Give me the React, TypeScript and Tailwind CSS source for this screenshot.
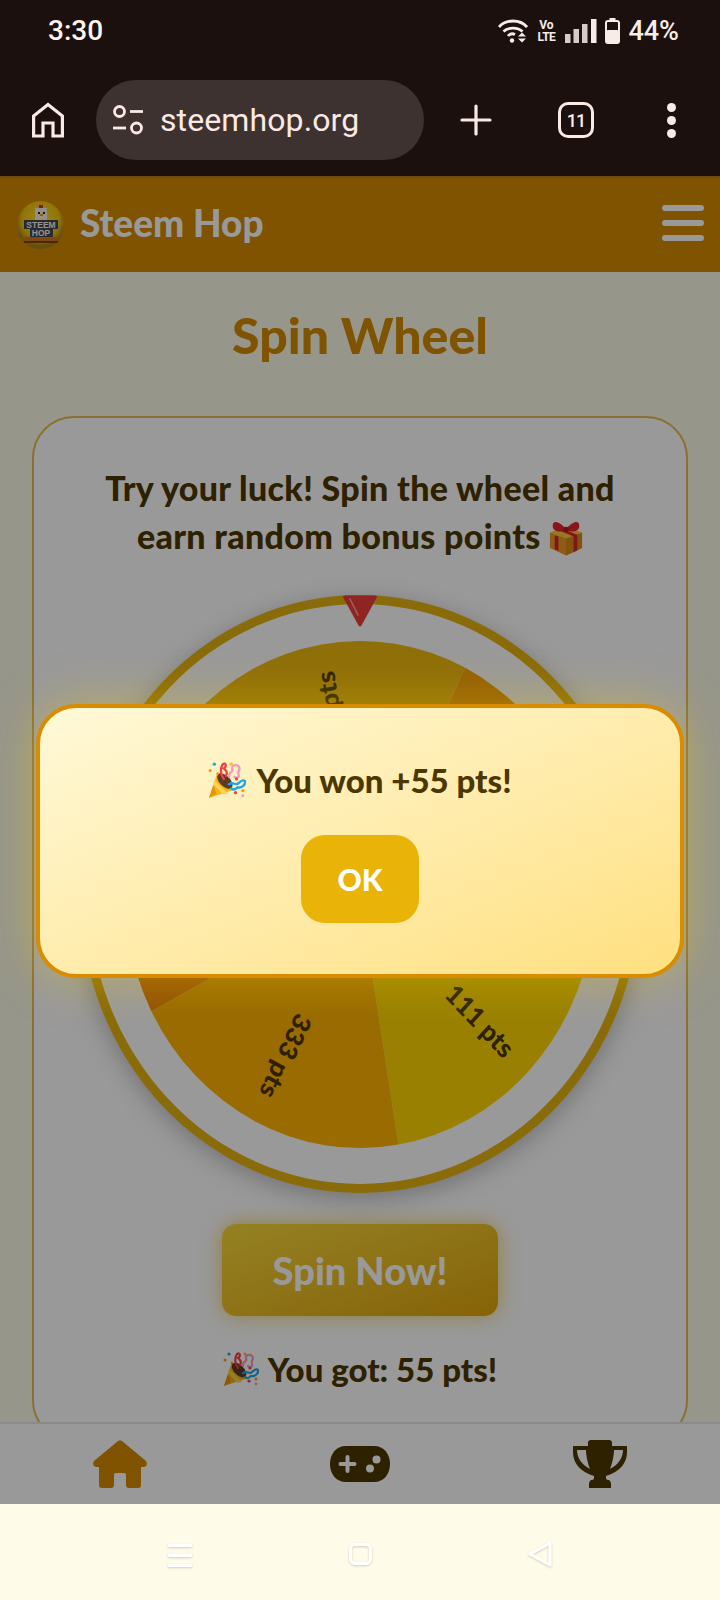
import React from 'react';

const SEGMENTS = [
  { from: -45.4, to: 26.6, color: '#eeb90f', label: '55 pts' },
  { from: 26.6, to: 98.6, color: '#f59e0b', label: '' },
  { from: 98.6, to: 170.6, color: '#ffd500', label: '111 pts' },
  { from: 170.6, to: 242.6, color: '#ffb300', label: '333 pts' },
  { from: 242.6, to: 314.6, color: '#f58a07', label: '' },
];

const polar = (deg: number, r: number) => {
  const rad = ((deg - 90) * Math.PI) / 180;
  return `${253.5 + r * Math.cos(rad)} ${253.5 + r * Math.sin(rad)}`;
};

const PartyPopper = ({ className }: { className: string }) => (
  <svg viewBox="0 0 36 36" className={className}>
    <path d="M1 35 L9 11 L25 27 Z" fill="#f5b21a" />
    <path d="M1 35 L5 23 L8 31 Z" fill="#e8930f" />
    <path d="M6 18 L19 31 L14 31.500 L5 22 Z" fill="#fcd34d" />
    <ellipse cx="16" cy="19" rx="5" ry="9" transform="rotate(-45 16 19)" fill="#5d3a24" />
    <path d="M15 17 C11 12 12 6 14 3 C17 1 18 5 15 7 C17 9 19 10 17 14" fill="none" stroke="#ef4444" strokeWidth="2.200" strokeLinecap="round" />
    <path d="M20 15 C19 10 25 11 23 7 C22 4 27 3 29 5 C32 8 27 10 29 13 C30 15 27 17 25 15" fill="none" stroke="#f49ac1" strokeWidth="2.200" strokeLinecap="round" />
    <path d="M20 22 C24 19 26 24 29 21 C31 19 33 17 35 19 C36 22 32 26 28 25 C26 27 24 28 22 26" fill="none" stroke="#1ea7e8" strokeWidth="2.200" strokeLinecap="round" />
    <circle cx="6" cy="3" r="1.600" fill="#1ea7e8" />
    <circle cx="2" cy="9" r="1.500" fill="#f59e0b" />
    <circle cx="9" cy="12" r="1.300" fill="#f59e0b" />
    <circle cx="22" cy="3" r="1.500" fill="#fbbf24" />
    <circle cx="27" cy="17" r="1.500" fill="#ef4444" />
    <circle cx="26" cy="30" r="1.600" fill="#ef4444" />
    <circle cx="33" cy="28" r="1.500" fill="#f59e0b" />
    <circle cx="33" cy="33" r="1.400" fill="#f49ac1" />
  </svg>
);

const Gift = () => (
  <svg viewBox="0 0 36 38" className="inline-block h-[37px] w-[34px] align-[-7px]">
    <path d="M1 14 L18 8 L35 14 L35 30 L18 38 L1 30 Z" fill="#ee9a28" />
    <path d="M18 20 L35 14 L35 30 L18 38 Z" fill="#d98a1a" />
    <path d="M1 14 L18 8 L35 14 L18 20 Z" fill="#ffc93c" />
    <path d="M10 11 L14 10 L30 16 L30 32.500 L26 34.500 L26 18 Z" fill="#d5262a" />
    <path d="M6 17 L10 18 L10 33 L6 31.500 Z" fill="#d5262a" />
    <path d="M18 10 C10 0 3 1 4 7 C4 13 12 14 18 11 C24 14 32 13 32 7 C33 1 26 0 18 10 Z" fill="#e8262c" />
    <circle cx="18" cy="10.500" r="3" fill="#b91c1c" />
  </svg>
);

const Logo = () => (
  <svg viewBox="0 0 47 48" className="h-12 w-[47px]">
    <defs>
      <radialGradient id="logoBg" cx="50%" cy="40%" r="55%">
        <stop offset="0%" stopColor="#ffe033" />
        <stop offset="70%" stopColor="#f6c410" />
        <stop offset="100%" stopColor="#a8801a" />
      </radialGradient>
    </defs>
    <ellipse cx="23.500" cy="24" rx="23.500" ry="24" fill="url(#logoBg)" />
    <rect x="18" y="7" width="12" height="12" fill="#f4efe0" />
    <rect x="22" y="4" width="4" height="3" fill="#d92d20" />
    <rect x="21" y="11" width="2" height="2" fill="#222" />
    <rect x="26" y="11" width="2" height="2" fill="#222" />
    <rect x="23" y="13" width="3" height="2" fill="#f59e0b" />
    <path d="M7 19 H41 V28 H36 V36 H13 V28 H7 Z" fill="#44474d" />
    <text x="24" y="27" textAnchor="middle" fontFamily="'Liberation Sans', sans-serif" fontWeight="700" fontSize="8.500" fill="#f5f5f5">STEEM</text>
    <text x="24" y="35" textAnchor="middle" fontFamily="'Liberation Sans', sans-serif" fontWeight="700" fontSize="8.500" fill="#f5f5f5">HOP</text>
    <path d="M7 36 H41 L40 41 H8 Z" fill="#d9761f" />
    <path d="M7 41 H41" stroke="#5c3310" strokeWidth="1.500" />
  </svg>
);

const StatusIcons = () => (
  <div className="flex items-center text-[#f7ece8]">
    <svg viewBox="0 0 30 24" className="h-6 w-[30px]" fill="none" stroke="currentColor" strokeWidth="2.800">
      <path d="M1 8 C8 0 22 0 29 8" />
      <path d="M5.500 12.500 C10 8 20 8 24.500 12.500" />
      <path d="M10 17 C12 14.500 15 14.500 17 15.500" />
      <circle cx="14" cy="21.500" r="2.200" fill="currentColor" stroke="none" />
      <path d="M20 17.500 H28 L24 13.500 Z M20 19.500 H28 L24 23.500 Z" fill="currentColor" stroke="none" />
    </svg>
    <div className="ml-[9px] flex w-[18px] flex-col items-center font-['Roboto',sans-serif] text-[12px] font-bold leading-[12px]">
      <span>Vo</span>
      <span className="tracking-[-0.5px]">LTE</span>
    </div>
    <svg viewBox="0 0 32 24" className="ml-[10px] h-6 w-8" fill="currentColor">
      <rect x="0" y="15" width="5.500" height="9" opacity="0.85" />
      <rect x="8.500" y="10" width="5.500" height="14" opacity="0.85" />
      <rect x="17" y="5" width="5.500" height="19" opacity="0.85" />
      <rect x="26" y="0" width="5.500" height="24" />
    </svg>
    <svg viewBox="0 0 15 26" className="ml-[8px] h-[26px] w-[15px]">
      <rect x="4.500" y="0" width="6" height="3" fill="currentColor" />
      <rect x="1" y="3" width="13" height="22" rx="2" fill="none" stroke="currentColor" strokeWidth="2" />
      <rect x="1" y="12" width="13" height="13" rx="2" fill="currentColor" />
    </svg>
    <span className="ml-[8px] font-['Roboto',sans-serif] text-[27px] font-medium leading-none">44%</span>
  </div>
);

const BrowserBar = () => (
  <div className="flex h-[116px] items-center pt-1 text-[#fbe9e3]">
    <svg viewBox="0 0 32 36" className="ml-8 h-9 w-8" fill="none" stroke="currentColor" strokeWidth="3.200">
      <path d="M1.600 34 V14 L16 2.500 L30.400 14 V34 H21 V21 H11 V34 Z" />
    </svg>
    <div className="ml-8 flex h-20 w-[328px] items-center rounded-full bg-[#3e3231]">
      <svg viewBox="0 0 30 32" className="ml-[17px] h-8 w-[30px]" fill="none" stroke="currentColor" strokeWidth="2.800">
        <circle cx="6.500" cy="7.500" r="5" />
        <path d="M17 7.500 H30" />
        <path d="M0 24 H13" />
        <circle cx="23.500" cy="24" r="5" />
      </svg>
      <span className="ml-[17px] font-['Roboto',sans-serif] text-[32px] leading-none tracking-[0.1px]">steemhop.org</span>
    </div>
    <svg viewBox="0 0 32 32" className="ml-[36px] h-8 w-8" fill="none" stroke="currentColor" strokeWidth="3.200" strokeLinecap="round">
      <path d="M16 2 V30 M2 16 H30" />
    </svg>
    <div className="ml-[66px] flex h-9 w-9 items-center justify-center rounded-[10px] border-[3.500px] border-[#fbe9e3] font-['Roboto',sans-serif] text-[18px] font-medium tracking-[-1px]">
      11
    </div>
    <div className="ml-[73px] flex flex-col gap-[4px]">
      <span className="h-[9px] w-[9px] rounded-full bg-[#fbe9e3]" />
      <span className="h-[9px] w-[9px] rounded-full bg-[#fbe9e3]" />
      <span className="h-[9px] w-[9px] rounded-full bg-[#fbe9e3]" />
    </div>
  </div>
);

const Wheel = () => (
  <div className="relative mx-auto mt-[35px] flex h-[598px] w-[560px] items-center justify-center rounded-[50%] border-[9px] border-[#e6b30f] bg-white shadow-[0_6px_24px_rgba(0,0,0,0.25)]">
    <svg viewBox="0 0 507 507" preserveAspectRatio="none" className="h-[507px] w-[470px]">
      {SEGMENTS.map((s) => (
        <path
          key={s.from}
          d={`M253.500 253.500 L${polar(s.from, 253.5)} A253.500 253.500 0 0 1 ${polar(s.to, 253.5)} Z`}
          fill={s.color}
        />
      ))}
      {SEGMENTS.filter((s) => s.label).map((s) => (
        <text
          key={s.label}
          x={253.5 + 226}
          y={253.5 + 9}
          textAnchor="end"
          fontFamily="Lato, sans-serif"
          fontWeight="900"
          fontSize="27"
          fill="#4d3700"
          transform={`rotate(${(s.from + s.to) / 2 - 90} 253.500 253.500)`}
        >
          {s.label}
        </text>
      ))}
    </svg>
    <svg viewBox="0 0 36 32" className="absolute left-1/2 top-[-9px] h-8 w-9 -translate-x-1/2">
      <path d="M3 0.500 H33 Q35.500 0.500 34.500 3 L19.500 30.500 Q18 32.500 16.500 30.500 L1.500 3 Q0.500 0.500 3 0.500 Z" fill="#ef3f38" />
      <path d="M8 4 L16 20" stroke="#f8a5a0" strokeWidth="1.500" strokeLinecap="round" />
    </svg>
  </div>
);

const HomeIcon = () => (
  <svg viewBox="0 0 54 48" className="h-12 w-[54px]" fill="#d48a00">
    <path d="M25 1 Q27 -0.500 29 1 L53 21 Q55.500 26 51 27 H48 V45 Q48 48 45 48 H36 Q33 48 33 45 V35 Q33 33 31 33 H23 Q21 33 21 35 V45 Q21 48 18 48 H9 Q6 48 6 45 V27 H3 Q-1.500 26 1 21 Z" />
  </svg>
);

const GameIcon = () => (
  <svg viewBox="0 0 60 36" className="h-9 w-[60px]">
    <path d="M16 0 H44 C54 0 60 8 60 18 C60 28 54 36 44 36 H16 C6 36 0 28 0 18 C0 8 6 0 16 0 Z" fill="#4d3700" />
    <path d="M17.500 11 V25 M10.500 18 H24.500" stroke="#fff" strokeWidth="4" strokeLinecap="round" />
    <circle cx="46.500" cy="13.500" r="4" fill="#fff" />
    <circle cx="40" cy="22.500" r="4" fill="#fff" />
  </svg>
);

const TrophyIcon = () => (
  <svg viewBox="0 0 54 48" className="h-12 w-[54px]">
    <path d="M15 3 Q15 0 18 0 H36 Q39 0 39 3 V6 H54 V12 C54 24 46 32 33 36 V38 Q33 40 35 40 H36 Q38 41 38 44 V48 H16 V44 Q16 41 18 40 H19 Q21 40 21 38 V36 C8 32 0 24 0 12 V6 H15 Z" fill="#4d3700" />
    <path d="M4 10 H13 C13 16 15 24 17 29 C9 25 4 18 4 10 Z" fill="#fff" />
    <path d="M50 10 H41 C41 16 39 24 37 29 C45 25 50 18 50 10 Z" fill="#fff" />
  </svg>
);

export default function App() {
  return (
    <div className="flex h-[1600px] w-[720px] flex-col overflow-hidden bg-[#1b100e] font-['Lato',sans-serif]">
      {/* system status */}
      <div className="flex h-[60px] items-center justify-between pl-12 pr-[41px] pt-[2px]">
        <span className="font-['Roboto',sans-serif] text-[28px] font-medium leading-none text-[#fdf3ef]">3:30</span>
        <StatusIcons />
      </div>
      <BrowserBar />

      <div className="relative flex min-h-0 flex-1 flex-col border-t-2 border-[#6e4a12]">
        <header className="flex h-[94px] shrink-0 items-center justify-between bg-[#d48a00] pl-[17px] pr-4">
          <div className="flex items-center gap-4">
            <Logo />
            <span className="-mt-[6px] text-[37px] font-black leading-none text-white">Steem Hop</span>
          </div>
          <div className="-mt-1 flex w-[42px] flex-col gap-[9px]">
            <span className="h-[6px] rounded-full bg-white" />
            <span className="h-[6px] rounded-full bg-white" />
            <span className="h-[6px] rounded-full bg-white" />
          </div>
        </header>

        <main className="min-h-0 flex-1 overflow-hidden bg-[#fafae8] px-8">
          <h1 className="mt-[34px] text-center text-[50px] font-black leading-[58px] text-[#d48a00]">Spin Wheel</h1>
          <section className="mt-[52px] rounded-[42px] border-2 border-[#e9bb55] bg-white pb-[49px] pt-[46px]">
            <p className="text-center text-[34px] font-black leading-[48px] tracking-[0.3px] text-[#4d3700]">
              Try your luck! Spin the wheel and
              <br />
              earn random bonus points <Gift />
            </p>
            <Wheel />
            <button className="mx-auto mt-[31px] flex h-[92px] w-[276px] items-center justify-center rounded-[14px] bg-linear-to-br from-[#f8d83a] to-[#e0a508] text-[38px] font-black text-white shadow-[0_0_20px_rgba(234,179,8,0.6)]">
              Spin Now!
            </button>
            <div className="mt-[31px] flex items-center justify-center gap-[9px] text-[33px] font-black leading-[44px] text-[#4d3700]">
              <PartyPopper className="h-9 w-9" />
              You got: 55 pts!
            </div>
          </section>
        </main>

        <nav className="flex h-[82px] shrink-0 items-center border-t-2 border-[#e8e8e8] bg-white">
          <div className="flex flex-1 justify-center"><HomeIcon /></div>
          <div className="flex flex-1 justify-center"><GameIcon /></div>
          <div className="flex flex-1 justify-center"><TrophyIcon /></div>
        </nav>

        {/* popup */}
        <div className="absolute inset-0 flex items-center justify-center bg-black/40">
          <div className="flex h-[274px] w-[648px] flex-col items-center rounded-[40px] border-4 border-[#d98c00] bg-linear-to-br from-[#fff9d8] to-[#ffe07f] shadow-[0_0_50px_rgba(255,215,0,0.35)]">
            <div className="mt-[52px] flex items-center gap-[10px] text-[33px] font-black leading-10 text-[#4d3700]">
              <PartyPopper className="h-[38px] w-[38px]" />
              You won +55 pts!
            </div>
            <button className="mt-[35px] flex h-[88px] w-[118px] items-center justify-center rounded-[24px] bg-[#e9b308] text-[30px] font-black text-white">
              OK
            </button>
          </div>
        </div>
      </div>

      {/* android nav */}
      <div className="flex h-[96px] shrink-0 items-start bg-[#fffbe9]">
        <div className="ml-[168px] mt-[40px] flex w-6 flex-col gap-[7px] drop-shadow-[0_1px_1px_rgba(0,0,0,0.18)]">
          <span className="h-[3px] bg-white" />
          <span className="h-[3px] bg-white" />
          <span className="h-[3px] bg-white" />
        </div>
        <div className="ml-[157px] mt-[39px] h-[22px] w-[23px] rounded-[6px] border-[3px] border-white drop-shadow-[0_1px_1px_rgba(0,0,0,0.18)]" />
        <svg viewBox="0 0 24 26" className="ml-[156px] mt-[37px] h-[26px] w-6 drop-shadow-[0_1px_1px_rgba(0,0,0,0.18)]" fill="none" stroke="#fff" strokeWidth="3" strokeLinejoin="round">
          <path d="M22 2 V24 L2 13 Z" />
        </svg>
      </div>
    </div>
  );
}
